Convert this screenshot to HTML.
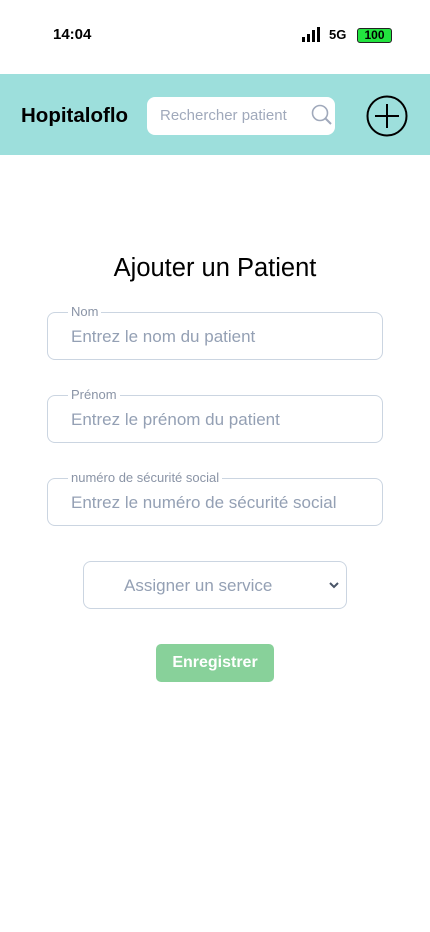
<!DOCTYPE html>
<html><head><meta charset="utf-8"><style>
*{margin:0;padding:0;box-sizing:border-box}
body{width:430px;height:932px;background:#fff;font-family:"Liberation Sans",sans-serif;position:relative;overflow:hidden}
.a{position:absolute}
.f{position:absolute;left:47px;width:336px;height:48px;border:1px solid #cbd5e1;border-radius:8px}
.f .l{position:absolute;left:20px;top:-9px;background:#fff;padding:0 3px;font-size:13px;color:#8a94a6;line-height:16px}
.f .p{position:absolute;left:23px;top:14px;font-size:17px;color:#94a0b4}
</style></head><body>
<div class="a" style="left:53px;top:26px;font-size:15px;font-weight:bold">14:04</div>
<div class="a" style="left:302px;top:27px;width:20px;height:15px">
<div class="a" style="left:0;top:10px;width:3px;height:5px;background:#000"></div>
<div class="a" style="left:5px;top:7px;width:3px;height:8px;background:#000"></div>
<div class="a" style="left:10px;top:3px;width:3px;height:12px;background:#000"></div>
<div class="a" style="left:15px;top:0;width:3px;height:15px;background:#000"></div></div>
<div class="a" style="left:329px;top:27px;font-size:13px;font-weight:bold">5G</div>
<div class="a" style="left:357px;top:28px;width:35px;height:15px;background:#22e33f;border:1px solid #222;border-radius:3px;font-size:12px;font-weight:bold;text-align:center;line-height:13px">100</div>
<div class="a" style="left:0;top:74px;width:430px;height:81px;background:#9ddfdc"></div>
<div class="a" style="left:21px;top:104px;font-size:20.5px;font-weight:bold">Hopitaloflo</div>
<div class="a" style="left:147px;top:97px;width:188px;height:38px;background:#fff;border-radius:8px"></div>
<div class="a" style="left:160px;top:107px;font-size:15px;color:#a0a9bb">Rechercher patient</div>
<svg class="a" style="left:311px;top:104px" width="22" height="22" viewBox="0 0 22 22"><circle cx="9" cy="9" r="7.5" fill="none" stroke="#a0a9bb" stroke-width="1.6"/><path d="M14.5 14.5L20 20" stroke="#a0a9bb" stroke-width="2"/></svg>
<svg class="a" style="left:366px;top:95px" width="42" height="42" viewBox="0 0 42 42"><circle cx="21" cy="21" r="19.5" fill="none" stroke="#000" stroke-width="2"/><path d="M21 9V33M9 21H33" stroke="#000" stroke-width="2"/></svg>
<div class="a" style="left:0;width:430px;top:254px;text-align:center;font-size:25.5px">Ajouter un Patient</div>
<div class="f" style="top:312px"><span class="l">Nom</span><span class="p">Entrez le nom du patient</span></div>
<div class="f" style="top:395px"><span class="l">Prénom</span><span class="p">Entrez le prénom du patient</span></div>
<div class="f" style="top:478px"><span class="l">numéro de sécurité social</span><span class="p">Entrez le numéro de sécurité social</span></div>
<div class="a" style="left:83px;top:561px;width:264px;height:48px;border:1px solid #cbd5e1;border-radius:8px"></div>
<div class="a" style="left:124px;top:576px;font-size:17px;color:#94a0b4">Assigner un service</div>
<svg class="a" style="left:328px;top:580px" width="12" height="10" viewBox="0 0 12 10"><path d="M2 3L6 7L10 3" fill="none" stroke="#4a5568" stroke-width="2"/></svg>
<div class="a" style="left:156px;top:644px;width:118px;height:38px;background:#88d19a;border-radius:5px;color:#fff;font-weight:bold;font-size:16px;text-align:center;line-height:38px">Enregistrer</div>
</body></html>
